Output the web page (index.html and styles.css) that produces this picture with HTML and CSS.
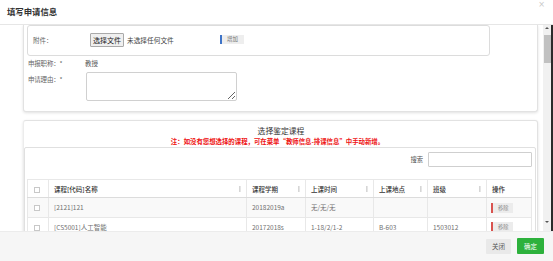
FILE: index.html
```html
<!DOCTYPE html>
<html lang="zh-CN">
<head>
<meta charset="utf-8">
<title>填写申请信息</title>
<link rel="stylesheet" href="styles.css">
</head>
<body>
<div class="modal">
  <div class="modal-header">
    <h4 class="modal-title">填写申请信息</h4>
    <span class="close">×</span>
  </div>
  <div class="modal-main">
    <div class="modal-body">
      <div class="card card-apply">
        <div class="file-box">
          <span class="file-label">附件：</span>
          <span class="file-btn">选择文件</span>
          <span class="file-none">未选择任何文件</span>
          <span class="btn-add">增加</span>
        </div>
        <div class="form-row">
          <span class="form-label">申报职称：*</span>
          <span class="form-value">教授</span>
        </div>
        <div class="form-row row-reason">
          <span class="form-label">申请理由：*</span>
          <textarea class="reason"></textarea>
        </div>
      </div>

      <div class="card card-course">
        <div class="course-title">选择鉴定课程</div>
        <div class="course-note">注：如没有您想选择的课程，可在菜单“教师信息-排课信息”中手动新增。</div>
        <div class="table-panel">
          <div class="search-row">
            <span class="search-label">搜索</span>
            <span class="search-input"></span>
          </div>
          <table class="course-table">
            <colgroup>
              <col class="c-check"><col class="c-name"><col class="c-term"><col class="c-time"><col class="c-place"><col class="c-class"><col class="c-op">
            </colgroup>
            <thead>
              <tr>
                <th><span class="chk"></span></th>
                <th><div class="th-in"><span>课程[代码]名称</span><i class="sort"></i></div></th>
                <th><div class="th-in"><span>课程学期</span><i class="sort"></i></div></th>
                <th><div class="th-in"><span>上课时间</span><i class="sort"></i></div></th>
                <th><div class="th-in"><span>上课地点</span><i class="sort"></i></div></th>
                <th><div class="th-in"><span>班级</span><i class="sort"></i></div></th>
                <th><div class="th-in"><span>操作</span></div></th>
              </tr>
            </thead>
            <tbody>
              <tr class="odd">
                <td><span class="chk"></span></td>
                <td>[2121]121</td>
                <td>20182019a</td>
                <td>无/无/无</td>
                <td></td>
                <td></td>
                <td><span class="btn-remove">移除</span></td>
              </tr>
              <tr>
                <td><span class="chk"></span></td>
                <td>[CS5001]人工智能</td>
                <td>20172018s</td>
                <td>1-18/2/1-2</td>
                <td>B-603</td>
                <td>1503012</td>
                <td><span class="btn-remove">移除</span></td>
              </tr>
            </tbody>
          </table>
        </div>
      </div>
    </div>
    <div class="scrollbar">
      <span class="sb-up"></span>
      <span class="sb-thumb"></span>
      <span class="sb-down"></span>
    </div>
    <div class="edge"></div>
  </div>
  <div class="modal-footer">
    <button class="btn btn-close" type="button">关闭</button>
    <button class="btn btn-ok" type="button">确定</button>
  </div>
</div>
</body>
</html>
```

FILE: styles.css
```css
* { box-sizing: border-box; }

html, body {
  margin: 0;
  padding: 0;
  background: #ffffff;
}

body {
  font-family: "Noto Sans CJK SC", "Noto Sans", sans-serif;
  font-size: 7px;
  color: #555;
}

.modal {
  width: 553px;
  height: 261px;
  display: flex;
  flex-direction: column;
  overflow: hidden;
  background: #fff;
}

/* header */
.modal-header {
  height: 25px;
  flex: none;
  display: flex;
  justify-content: space-between;
  align-items: flex-start;
  border-bottom: 1px solid #e6e6e6;
}

.modal-title {
  margin: 0;
  padding-left: 7px;
  font-size: 8.4px;
  line-height: 22px;
  font-weight: bold;
  color: #333;
}

.close {
  font-family: "DejaVu Sans", sans-serif;
  font-size: 8px;
  line-height: 8px;
  color: #c8c8c8;
  margin: 1px 8px 0 0;
}

/* main scroll area */
.modal-main {
  height: 206px;
  flex: none;
  display: flex;
  overflow: hidden;
}

.modal-body {
  flex: 1;
  overflow: hidden;
  padding-left: 23px;
}

.card {
  width: 515px;
  background: #fff;
  border: 1px solid #e2e2e2;
  box-shadow: 0 1px 3px rgba(0, 0, 0, 0.12);
}

.card-apply {
  border-top: none;
  border-radius: 0 0 3px 3px;
  padding: 0 0 10px 3px;
}

.file-box {
  width: 463px;
  height: 31px;
  border: 1px solid #dcdcdc;
  border-radius: 3px;
  display: flex;
  align-items: center;
  padding-left: 5px;
  padding-bottom: 2px;
}

.file-label {
  width: 57px;
  color: #666;
  font-size: 6.5px;
}

.file-btn {
  width: 34px;
  height: 14px;
  border: 1px solid #a9a9a9;
  border-radius: 1px;
  background: #efefef;
  color: #222;
  font-size: 7px;
  line-height: 12px;
  text-align: center;
}

.file-none {
  width: 96px;
  padding-left: 3px;
  color: #444;
  font-size: 6.7px;
}

.btn-add {
  height: 9px;
  border-left: 2px solid #3f74c8;
  background: #eeeeee;
  color: #777;
  font-size: 5.5px;
  line-height: 9px;
  padding: 0 6px 0 5px;
}

.form-row {
  display: flex;
  align-items: center;
  height: 14px;
  padding-left: 1px;
}

.form-label {
  width: 57px;
  color: #666;
  font-size: 6.5px;
  line-height: 14px;
  letter-spacing: -0.2px;
}

.form-value {
  color: #555;
  font-size: 6.5px;
}

.row-reason {
  height: auto;
  align-items: flex-start;
  margin-top: 2px;
}

.reason {
  display: block;
  width: 151px;
  height: 29px;
  margin: 0 0 0 1px;
  border: 1px solid #d0d0d0;
  border-radius: 2px;
  resize: both;
  background: #fff;
}

/* course card */
.card-course {
  margin-top: 8px;
  border-radius: 3px 3px 0 0;
  border-left-color: #ececec;
  height: 130px;
}

.course-title {
  text-align: center;
  font-size: 7.8px;
  line-height: 12px;
  padding-top: 4px;
  color: #333;
  padding-left: 1px;
}

.course-note {
  text-align: center;
  font-size: 6.4px;
  line-height: 9px;
  color: #ee1111;
  font-weight: bold;
  padding-right: 6px;
}

.table-panel {
  margin-top: 1px;
  width: 512px;
  height: 120px;
  border: 1px solid #e0e0e0;
  border-radius: 2px;
  padding: 0 3px 0 2px;
}

.search-row {
  display: flex;
  justify-content: flex-end;
  align-items: flex-start;
  padding-top: 4px;
  height: 31px;
}

.search-label {
  font-size: 6.3px;
  color: #555;
  line-height: 15px;
  margin-right: 5px;
}

.search-input {
  width: 104px;
  height: 15px;
  border: 1px solid #cfcfcf;
  border-radius: 1px;
  background: #fff;
}

.course-table {
  width: 504px;
  border-collapse: collapse;
  table-layout: fixed;
  font-size: 6.5px;
}

.c-check { width: 21px; }
.c-name { width: 198px; }
.c-term { width: 59px; }
.c-time { width: 68px; }
.c-place { width: 54px; }
.c-class { width: 59px; }
.c-op { width: 45px; }

.course-table th,
.course-table td {
  border: 1px solid #e8e8e8;
  padding: 0 0 0 5px;
  text-align: left;
  white-space: nowrap;
  overflow: hidden;
}

.course-table th:first-child,
.course-table td:first-child {
  padding: 0;
  text-align: center;
}

.course-table th {
  height: 18px;
  font-weight: 500;
  color: #333;
  border-bottom-color: #dcdcdc;
}

.course-table td {
  height: 19.5px;
  color: #707070;
}

.course-table tr.odd td {
  background: #f9f9f9;
}

.th-in {
  display: flex;
  justify-content: space-between;
  align-items: center;
  padding-right: 5px;
}

.sort {
  display: block;
  width: 2px;
  height: 6px;
  border-left: 1px solid #d6d6d6;
  border-right: 1px solid #e6e6e6;
}

.chk {
  display: inline-block;
  width: 6px;
  height: 6px;
  border: 1px solid #c8c8c8;
  background: #fff;
  vertical-align: middle;
  margin-right: 3px;
}

.course-table td:last-child {
  padding-left: 4px;
}

.btn-remove {
  display: inline-block;
  height: 10px;
  line-height: 10px;
  padding: 0 5px 0 5px;
  border-left: 2px solid #d9534f;
  background: #ececec;
  color: #888;
  font-size: 5.2px;
  vertical-align: middle;
}

/* scrollbar */
.scrollbar {
  width: 8px;
  flex: none;
  background: #f1f1f1;
  display: flex;
  flex-direction: column;
  align-items: center;
}

.sb-up {
  margin-top: 2px;
  width: 0;
  height: 0;
  border-left: 2px solid transparent;
  border-right: 2px solid transparent;
  border-bottom: 2px solid #555;
}

.sb-thumb {
  margin-top: 6px;
  width: 7px;
  height: 28px;
  background: #c1c1c1;
}

.sb-down {
  margin-top: auto;
  margin-bottom: 8px;
  width: 0;
  height: 0;
  border-left: 2px solid transparent;
  border-right: 2px solid transparent;
  border-top: 2px solid #555;
}

.edge {
  width: 2px;
  flex: none;
  background: #2b2b2b;
}

/* footer */
.modal-footer {
  flex: 1;
  display: flex;
  justify-content: flex-end;
  align-items: flex-start;
  gap: 6px;
  padding: 6px 9px 0 0;
  background: #f6f6f6;
  border-top: 1px solid #ececec;
}

.btn {
  font-family: "Noto Sans CJK SC", sans-serif;
  font-size: 6.5px;
  height: 16px;
  line-height: 16px;
  padding: 0;
  border: none;
  border-radius: 1px;
}

.btn-close {
  width: 25px;
  background: #e9e9e9;
  color: #555;
  margin-top: 1px;
  height: 15px;
  line-height: 15px;
}

.btn-ok {
  width: 27px;
  background: #2db13c;
  color: #fff;
}
```
